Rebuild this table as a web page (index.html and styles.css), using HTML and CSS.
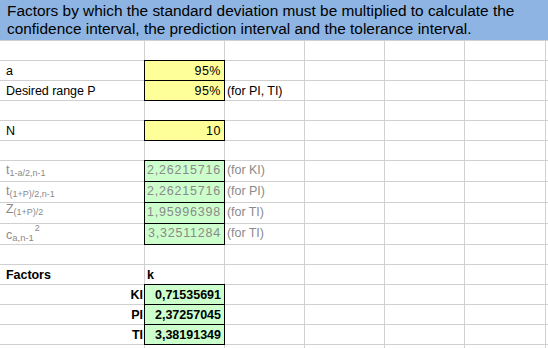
FILE: index.html
```html
<!DOCTYPE html>
<html>
<head>
<meta charset="utf-8">
<link rel="stylesheet" href="styles.css">
</head>
<body>
<div class="sheet">
  <div class="title">Factors by which the standard deviation must be multiplied to calculate the confidence interval, the prediction interval and the tolerance interval.</div>

  <span></span><span></span><span></span><span></span><span></span><span></span><span></span><span></span>

  <span></span><span class="lbl">a</span><span class="in num">95%</span><span></span><span></span><span></span><span></span><span></span>

  <span></span><span class="lbl">Desired range P</span><span class="in num">95%</span><span class="lbl">(for PI, TI)</span><span></span><span></span><span></span><span></span>

  <span></span><span></span><span></span><span></span><span></span><span></span><span></span><span></span>

  <span></span><span class="lbl">N</span><span class="in num">10</span><span></span><span></span><span></span><span></span><span></span>

  <span></span><span></span><span></span><span></span><span></span><span></span><span></span><span></span>

  <span></span><span class="lbl grey r6"><span>t<sub>1-a/2,n-1</sub></span></span><span class="calc num r6">2,26215716</span><span class="lbl grey r6">(for KI)</span><span></span><span></span><span></span><span></span>

  <span></span><span class="lbl grey r6"><span>t<sub>(1+P)/2,n-1</sub></span></span><span class="calc num r6">2,26215716</span><span class="lbl grey r6">(for PI)</span><span></span><span></span><span></span><span></span>

  <span></span><span class="lbl grey r9"><span>Z<sub>(1+P)/2</sub></span></span><span class="calc num r6">1,95996398</span><span class="lbl grey r6">(for TI)</span><span></span><span></span><span></span><span></span>

  <span></span><span class="lbl grey r4"><span>c<sub class="big">a,n-1</sub><sup>2</sup></span></span><span class="calc num r6">3,32511284</span><span class="lbl grey r6">(for TI)</span><span></span><span></span><span></span><span></span>

  <span></span><span></span><span></span><span></span><span></span><span></span><span></span><span></span>

  <span></span><span class="lbl bold">Factors</span><span class="lbl bold">k</span><span></span><span></span><span></span><span></span><span></span>

  <span></span><span class="lbl bold right">KI</span><span class="res">0,71535691</span><span></span><span></span><span></span><span></span><span></span>

  <span></span><span class="lbl bold right">PI</span><span class="res">2,37257045</span><span></span><span></span><span></span><span></span><span></span>

  <span></span><span class="lbl bold right">TI</span><span class="res">3,38191349</span><span></span><span></span><span></span><span></span><span></span>

  <span></span><span></span><span></span><span></span><span></span><span></span><span></span><span></span>
</div>
</body>
</html>
```

FILE: styles.css
```css
html, body {
  margin: 0;
  padding: 0;
  background: #ffffff;
  overflow: hidden;
}

.sheet {
  width: 548px;
  height: 348px;
  overflow: hidden;
  display: grid;
  grid-template-columns: 3px 140px 79px 79px 79px 79px 80px 1fr;
  grid-template-rows: 40px repeat(6, 19px) repeat(4, 20px) repeat(5, 19px) 19px;
  gap: 1px;
  background: #d0d0d0;
  font-family: "Liberation Sans", Arial, sans-serif;
  font-size: 12.5px;
  color: #000;
}

.sheet > * {
  background: #ffffff;
  display: flex;
  align-items: flex-end;
  line-height: 15px;
  padding: 0 2px 1px 2px;
  white-space: nowrap;
  min-width: 0;
  box-sizing: border-box;
}

.sheet > .title {
  grid-column: 1 / -1;
  background: #8db4e2;
  display: block;
  font-size: 15.4px;
  line-height: 18px;
  padding: 2px 0 0 7px;
  white-space: normal;
}

.lbl {
  letter-spacing: -0.05px;
}

.num {
  justify-content: flex-end;
  padding-right: 3px;
  letter-spacing: 0.5px;
}

.in {
  background: #ffff99 !important;
  outline: 1px solid #000;
}

.calc {
  background: #ccffcc !important;
  outline: 1px solid #000;
  color: #8a8a8a;
  letter-spacing: 0.8px;
}

.res {
  background: #ccffcc !important;
  outline: 1px solid #000;
  font-weight: bold;
  justify-content: flex-end;
  padding-right: 3px;
}

.grey {
  color: #8a8a8a;
}

.bold {
  font-weight: bold;
}

.right {
  justify-content: flex-end;
  padding-right: 1px;
}

.sheet > .r4 { padding-bottom: 1px; }
.sheet > .r6 { padding-bottom: 3px; }
.sheet > .r9 { padding-bottom: 6px; }

sub {
  font-size: 9px;
  line-height: 0;
  vertical-align: -2px;
  letter-spacing: 0;
}

sub.big {
  font-size: 9.5px;
}

sup {
  font-size: 9px;
  line-height: 0;
  vertical-align: 8px;
  margin-left: 1px;
}
```
